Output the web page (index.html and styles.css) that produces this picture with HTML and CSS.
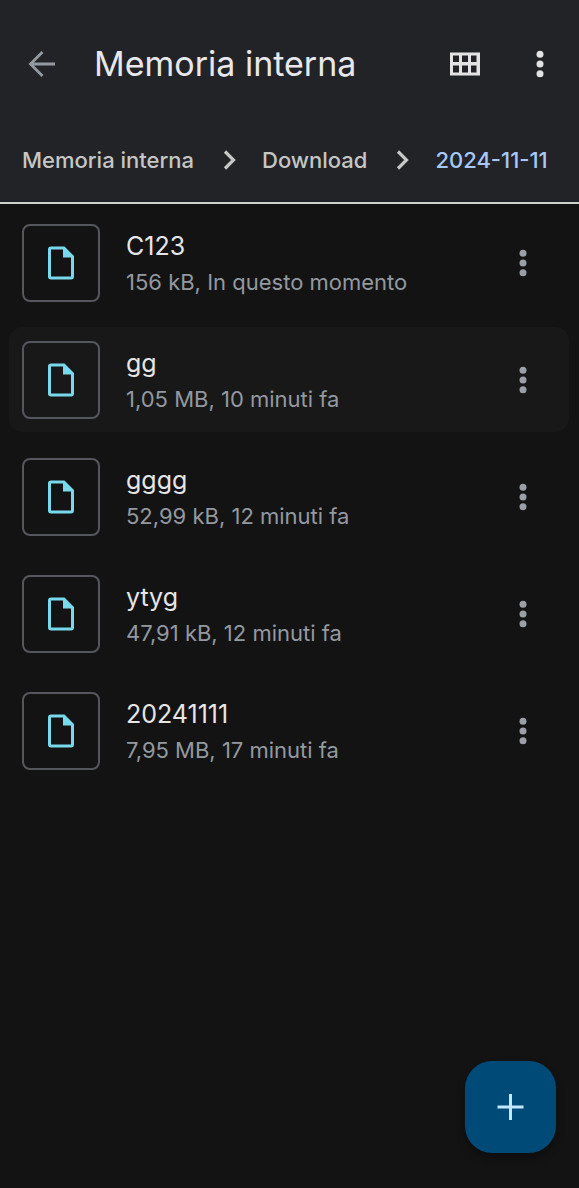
FILE: index.html
```html
<!DOCTYPE html>
<html lang="it">
<head>
<meta charset="utf-8">
<meta name="viewport" content="width=device-width, initial-scale=1">
<title>Memoria interna</title>
<link rel="stylesheet" href="styles.css">
</head>
<body>
<svg class="defs" aria-hidden="true">
  <symbol id="dots" viewBox="0 0 8 28"><circle cx="4" cy="4.2" r="3.5"/><circle cx="4" cy="14" r="3.5"/><circle cx="4" cy="23.8" r="3.5"/></symbol>
  <symbol id="file" viewBox="0 0 26 34"><path fill-rule="evenodd" d="M3 .5H16.5L26 10V30.5a3 3 0 0 1-3 3H3a3 3 0 0 1-3-3V3.500a3 3 0 0 1 3-3ZM3 3.500V30.500H23V11.500H15V3.500Z"/></symbol>
  <symbol id="chevron" viewBox="0 0 14 20"><path d="M2 1.500L10.500 10L2 18.500" fill="none" stroke="currentColor" stroke-width="3.200"/></symbol>
</svg>
<header class="top">
  <div class="bar">
    <button class="icon-button back" aria-label="Indietro"><svg width="28" height="28" viewBox="0 0 28 28"><path d="M27 14H3M14.500 2L2.500 14L14.500 26" fill="none" stroke="currentColor" stroke-width="2.800"/></svg></button>
    <h1 class="title">Memoria interna</h1>
    <button class="icon-button" aria-label="Vista griglia"><svg width="30" height="24" viewBox="0 0 30 24"><path fill-rule="evenodd" d="M0 .5H30V23.500H0ZM3 3.500V10H9V3.500ZM12 3.500V10H18V3.500ZM21 3.500V10H26.500V3.500ZM3 13.500V20.500H9V13.500ZM12 13.500V20.500H18V13.500ZM21 13.500V20.500H26.500V13.500Z"/></svg></button>
    <button class="icon-button menu" aria-label="Altre opzioni"><svg width="8" height="28"><use href="#dots"/></svg></button>
  </div>
  <nav class="crumbs" aria-label="Percorso">
    <a class="crumb" href="#">Memoria interna</a>
    <svg class="chevron" width="14" height="20"><use href="#chevron"/></svg>
    <a class="crumb" href="#">Download</a>
    <svg class="chevron" width="14" height="20"><use href="#chevron"/></svg>
    <a class="crumb current" href="#" aria-current="page">2024-11-11</a>
  </nav>
</header>
<main>
  <ul class="files">
    <li class="row">
      <span class="thumb"><svg width="26" height="34"><use href="#file"/></svg></span>
      <div class="info"><div class="name">C123</div><div class="meta">156 kB, In questo momento</div></div>
      <button class="icon-button more" aria-label="Opzioni per C123"><svg width="8" height="28"><use href="#dots"/></svg></button>
    </li>
    <li class="row active">
      <span class="thumb"><svg width="26" height="34"><use href="#file"/></svg></span>
      <div class="info"><div class="name">gg</div><div class="meta">1,05 MB, 10 minuti fa</div></div>
      <button class="icon-button more" aria-label="Opzioni per gg"><svg width="8" height="28"><use href="#dots"/></svg></button>
    </li>
    <li class="row">
      <span class="thumb"><svg width="26" height="34"><use href="#file"/></svg></span>
      <div class="info"><div class="name">gggg</div><div class="meta">52,99 kB, 12 minuti fa</div></div>
      <button class="icon-button more" aria-label="Opzioni per gggg"><svg width="8" height="28"><use href="#dots"/></svg></button>
    </li>
    <li class="row">
      <span class="thumb"><svg width="26" height="34"><use href="#file"/></svg></span>
      <div class="info"><div class="name">ytyg</div><div class="meta">47,91 kB, 12 minuti fa</div></div>
      <button class="icon-button more" aria-label="Opzioni per ytyg"><svg width="8" height="28"><use href="#dots"/></svg></button>
    </li>
    <li class="row">
      <span class="thumb"><svg width="26" height="34"><use href="#file"/></svg></span>
      <div class="info"><div class="name">20241111</div><div class="meta">7,95 MB, 17 minuti fa</div></div>
      <button class="icon-button more" aria-label="Opzioni per 20241111"><svg width="8" height="28"><use href="#dots"/></svg></button>
    </li>
  </ul>
</main>
<button class="fab" aria-label="Aggiungi"><svg width="27" height="28" viewBox="0 0 27 28"><path d="M13.500 1V27M.5 14H26.500" fill="none" stroke="currentColor" stroke-width="3"/></svg></button>
</body>
</html>
```
FILE: styles.css
```css
* { box-sizing: border-box; }
body {
  margin: 0;
  min-height: 100vh;
  background: #131313;
  color: #e3e3e3;
  font-family: Inter, Roboto, sans-serif;
}
svg { display: block; fill: currentColor; }
.defs { position: absolute; width: 0; height: 0; }
.top {
  background: #222327;
  border-bottom: 2px solid #cfcfcb;
}
.bar {
  display: flex;
  align-items: center;
  height: 128px;
  padding: 0 15px 0 18px;
}
.icon-button {
  display: grid;
  place-items: center;
  width: 48px;
  height: 48px;
  padding: 0;
  border: 0;
  background: none;
  color: #e3e3e3;
  flex: none;
}
.back { color: #9399a0; }
.title {
  flex: 1;
  margin: 0 0 0 28px;
  font-size: 34px;
  font-weight: 400;
  line-height: 48px;
  color: #e8e8ec;
  white-space: nowrap;
}
.menu { margin-left: 27px; }
.crumbs {
  display: flex;
  align-items: center;
  height: 74px;
  padding: 0 22px 10px;
}
.crumb {
  color: #c5c6c5;
  font-size: 22px;
  font-weight: 500;
  line-height: 32px;
  text-decoration: none;
  white-space: nowrap;
}
.current { color: #a8c7fa; }
.chevron { flex: none; margin: 0 25px 0 29px; color: #c5c6c5; }
.files {
  display: flex;
  flex-direction: column;
  gap: 12px;
  margin: 0;
  padding: 6px 10px 120px 9px;
  list-style: none;
}
.row {
  display: flex;
  align-items: center;
  height: 105px;
  padding: 0 22px 0 13px;
  border-radius: 14px;
}
.active { background: #181818; }
.thumb {
  display: grid;
  place-items: center;
  flex: none;
  width: 78px;
  height: 78px;
  border: 2px solid #55575c;
  border-radius: 8px;
  color: #78d9ec;
}
.info { flex: 1; margin-left: 26px; padding-top: 2px; min-width: 0; }
.name { font-size: 25px; line-height: 36px; color: #e6e6e6; }
.meta { font-size: 22px; line-height: 36px; color: #9399a0; }
.more { color: #9ba0a6; }
.fab {
  position: fixed;
  right: 23px;
  bottom: 35px;
  display: grid;
  place-items: center;
  width: 91px;
  height: 92px;
  padding: 0;
  border: 0;
  border-radius: 27px;
  background: #004a77;
  color: #c2e7ff;
  box-shadow: 0 5px 8px rgba(0, 0, 0, 0.3);
}
```
